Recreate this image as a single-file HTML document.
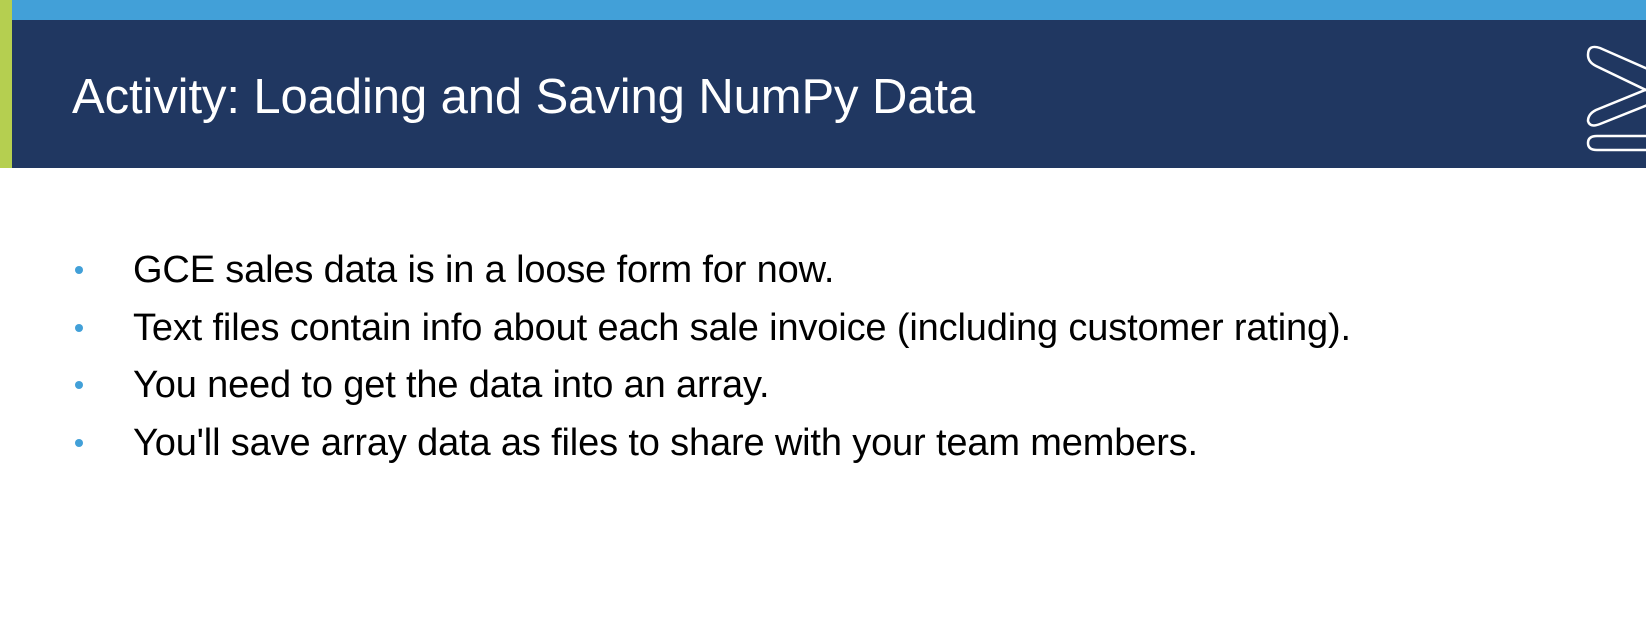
<!DOCTYPE html>
<html><head><style>
body{margin:0;width:1646px;height:638px;background:#fff;position:relative;overflow:hidden;font-family:"Liberation Sans",sans-serif}
.g{position:absolute;left:0;top:0;width:12px;height:168px;background:#b5cf50}
.t{position:absolute;left:12px;top:0;right:0;height:20px;background:#42a0d8}
.n{position:absolute;left:12px;top:20px;right:0;height:148px;background:#203761}
h1{position:absolute;left:72px;top:68px;margin:0;font-weight:normal;color:#fff;font-size:49px;line-height:58px;letter-spacing:-0.1px}
ul{position:absolute;left:0;top:246px;margin:0;padding:0;list-style:none}
li{position:relative;padding-left:133px;height:57.5px;font-size:38px;color:#000;letter-spacing:-0.15px;line-height:48px}
li:before{content:"";position:absolute;left:75px;top:20px;width:8px;height:8px;border-radius:50%;background:#42a0d8}
</style></head><body>
<div class="g"></div><div class="t"></div><div class="n"></div>
<h1>Activity: Loading and Saving NumPy Data</h1>
<svg style="position:absolute;left:0;top:0" width="1646" height="168">
<g fill="none" stroke="#fff" stroke-width="2.5">
<path d="M1650 70 L1600 48 Q1588 44 1588 55 Q1588 62 1596 66 L1650 92"/>
<path d="M1650 88 L1596 110 Q1588 114 1588 121 Q1590 128 1600 124 L1650 104"/>
<path d="M1650 136 L1597 136 Q1588 136 1588 143 Q1588 150 1597 150 L1650 150"/>
</g></svg>
<ul>
<li>GCE sales data is in a loose form for now.</li>
<li>Text files contain info about each sale invoice (including customer rating).</li>
<li>You need to get the data into an array.</li>
<li>You'll save array data as files to share with your team members.</li>
</ul>
</body></html>
